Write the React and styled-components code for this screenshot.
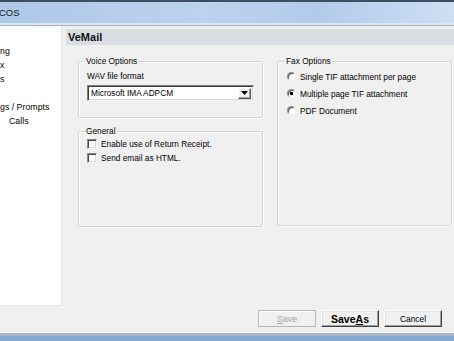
import React from "react";
import styled, { createGlobalStyle } from "styled-components";

const GlobalStyle = createGlobalStyle`
  html, body {
    margin: 0;
    padding: 0;
    background: #f0f0f0;
    overflow: hidden;
  }
  body {
    font-family: "Liberation Sans", Arial, sans-serif;
    color: #000;
  }
`;

const navItems = [
  { text: "ng", indent: 0 },
  { text: "x", indent: 0 },
  { text: "s", indent: 0 },
  { text: "", indent: 0 },
  { text: "gs / Prompts", indent: 0 },
  { text: "Calls", indent: 9 },
];

const faxOptions = [
  { label: "Single TIF attachment per page", checked: false },
  { label: "Multiple page TIF attachment", checked: true },
  { label: "PDF Document", checked: false },
];

export default function App() {
  return (
    <>
      <GlobalStyle />
      <Window>
        <TitleBar>
          <TitleText>COS</TitleText>
        </TitleBar>
        <TitleEdge />
        <Body>
          <TopRow>
            <NavPanel>
              {navItems.map((item, i) => (
                <NavItem key={i} $indent={item.indent}>
                  {item.text}
                </NavItem>
              ))}
            </NavPanel>
            <Main>
              <PageHeader>VeMail</PageHeader>
              <Columns>
                <Column>
                  <Group $height={62}>
                    <Legend>Voice Options</Legend>
                    <FieldLabel>WAV file format</FieldLabel>
                    <Select>
                      <SelectValue>Microsoft IMA ADPCM</SelectValue>
                      <SelectArrow>
                        <svg width="7" height="4" viewBox="0 0 7 4">
                          <path d="M0 0h7L3.5 4z" fill="#000" />
                        </svg>
                      </SelectArrow>
                    </Select>
                  </Group>
                  <Group $height={101}>
                    <Legend>General</Legend>
                    <OptionList $top={1}>
                      <OptionRow $h={14}>
                        <CheckBox />
                        Enable use of Return Receipt.
                      </OptionRow>
                      <OptionRow $h={14}>
                        <CheckBox />
                        Send email as HTML.
                      </OptionRow>
                    </OptionList>
                  </Group>
                </Column>
                <Column $wide>
                  <Group $height={170} $pad={9}>
                    <Legend>Fax Options</Legend>
                    <OptionList $top={2}>
                      {faxOptions.map((o) => (
                        <OptionRow key={o.label} $h={17}>
                          <Radio $checked={o.checked} />
                          {o.label}
                        </OptionRow>
                      ))}
                    </OptionList>
                  </Group>
                </Column>
              </Columns>
            </Main>
          </TopRow>
          <Footer>
            <Button disabled>
              <u>S</u>ave
            </Button>
            <Button $bold>
              Save<u>A</u>s
            </Button>
            <Button>Cancel</Button>
          </Footer>
        </Body>
        <BottomEdge />
      </Window>
    </>
  );
}

const Window = styled.div`
  width: 454px;
  height: 341px;
  display: flex;
  flex-direction: column;
  background: #f0f0f0;
  overflow: hidden;
`;

const TitleBar = styled.div`
  height: 21px;
  border-top: 2px solid #3e4e62;
  background: linear-gradient(
    to right,
    #aec8e9 0%,
    #bcd2ee 45%,
    #b2cbeb 70%,
    #cddff4 100%
  );
  display: flex;
  align-items: center;
`;

const TitleText = styled.span`
  font-family: "Liberation Sans", Arial, sans-serif;
  font-size: 9.5px;
  color: #0f1a28;
  margin-left: -1px;
`;

const TitleEdge = styled.div`
  height: 2px;
  background: #dde7f3;
  border-bottom: 1px solid #a7b2bf;
`;

const Body = styled.div`
  flex: 1;
  display: flex;
  flex-direction: column;
`;

const TopRow = styled.div`
  height: 280px;
  display: flex;
`;

const NavPanel = styled.div`
  width: 62px;
  background: #fff;
  border-right: 1px solid #e6e6e6;
  border-bottom: 1px solid #e6e6e6;
  padding-top: 18px;
  box-sizing: border-box;
`;

const NavItem = styled.div`
  height: 14px;
  line-height: 14px;
  font-size: 8.8px;
  padding-left: ${(p) => p.$indent}px;
  white-space: nowrap;
  color: #000;
`;

const Main = styled.div`
  flex: 1;
  padding: 3px 0 0 4px;
  display: flex;
  flex-direction: column;
`;

const PageHeader = styled.div`
  height: 16px;
  line-height: 16px;
  background: #d9dee4;
  padding-left: 2px;
  font-weight: bold;
  font-size: 11px;
  color: #111;
`;

const Columns = styled.div`
  display: flex;
  gap: 14px;
  padding: 11px 2px 0 12px;
`;

const Column = styled.div`
  display: flex;
  flex-direction: column;
  gap: 8px;
  width: ${(p) => (p.$wide ? 175 : 185)}px;
`;

const Group = styled.fieldset`
  margin: 0;
  height: ${(p) => p.$height}px;
  box-sizing: border-box;
  padding: 0 ${(p) => p.$pad ?? 8}px;
  border: 1px solid #d3d3d3;
  box-shadow: inset 1px 1px 0 #fff, 1px 1px 0 #fff;
  border-radius: 2px;
  font-size: 8.3px;
`;

const Legend = styled.legend`
  padding: 0 1px;
  margin-left: -2px;
  font-size: 8.3px;
  line-height: 10px;
`;

const FieldLabel = styled.div`
  margin-top: 5px;
  line-height: 10px;
`;

const Select = styled.div`
  margin-top: 4px;
  height: 16px;
  box-sizing: border-box;
  background: #fff;
  border: 1px solid;
  border-color: #7d7d7d #f4f4f4 #f4f4f4 #7d7d7d;
  box-shadow: inset 1px 1px 0 #3c3c3c, inset -1px -1px 0 #d8d8d8;
  display: flex;
  align-items: center;
  justify-content: space-between;
  padding: 0 2px 0 3px;
`;

const SelectValue = styled.span`
  font-size: 8.3px;
  white-space: nowrap;
`;

const SelectArrow = styled.span`
  width: 13px;
  height: 11px;
  box-sizing: border-box;
  background: #f0f0f0;
  border: 1px solid;
  border-color: #fff #555 #555 #fff;
  box-shadow: inset -1px -1px 0 #a0a0a0;
  display: flex;
  align-items: center;
  justify-content: center;
`;

const OptionList = styled.div`
  margin-top: ${(p) => p.$top ?? 0}px;
  display: flex;
  flex-direction: column;
`;

const OptionRow = styled.div`
  height: ${(p) => p.$h}px;
  display: flex;
  align-items: center;
  gap: 4px;
  font-size: 8.3px;
  white-space: nowrap;
`;

const CheckBox = styled.span`
  width: 10px;
  height: 10px;
  box-sizing: border-box;
  border: 1px solid;
  border-color: #8a8a8a #f6f6f6 #f6f6f6 #8a8a8a;
  box-shadow: inset 1px 1px 0 #4a4a4a, inset -1px -1px 0 #dcdcdc;
  background: #fff;
`;

const Radio = styled.span`
  width: 9px;
  height: 9px;
  box-sizing: border-box;
  border-radius: 50%;
  border: 1px solid;
  border-color: #8a8a8a #f2f2f2 #f2f2f2 #8a8a8a;
  box-shadow: inset 1px 1px 0 #505050;
  background: ${(p) =>
    p.$checked ? "radial-gradient(circle, #000 0 1.6px, #fff 2px)" : "#fff"};
`;

const Footer = styled.div`
  flex: 1;
  display: flex;
  justify-content: flex-end;
  align-items: flex-start;
  gap: 5px;
  padding: 4px 12px 0 0;
`;

const Button = styled.button`
  width: 58px;
  height: 17px;
  padding: 0;
  box-sizing: border-box;
  background: #f0f0f0;
  font-family: "Liberation Sans", Arial, sans-serif;
  font-size: ${(p) => (p.$bold ? "10.5px" : "8.4px")};
  font-weight: ${(p) => (p.$bold ? "bold" : "normal")};
  color: #000;
  border: 1px solid;
  border-color: #fff #3f3f3f #3f3f3f #fff;
  box-shadow: inset -1px -1px 0 #a0a0a0, inset 1px 1px 0 #e3e3e3;
  &:disabled {
    color: #a3a3a3;
    font-size: 8.8px;
    border-color: #b5b5b5;
    box-shadow: inset 1px 1px 0 #fff;
  }
`;

const BottomEdge = styled.div`
  height: 8px;
  border-top: 1px solid #fafafa;
  background: linear-gradient(to bottom, #a9b6c6 0 3px, #86a9d6 3px);
`;
